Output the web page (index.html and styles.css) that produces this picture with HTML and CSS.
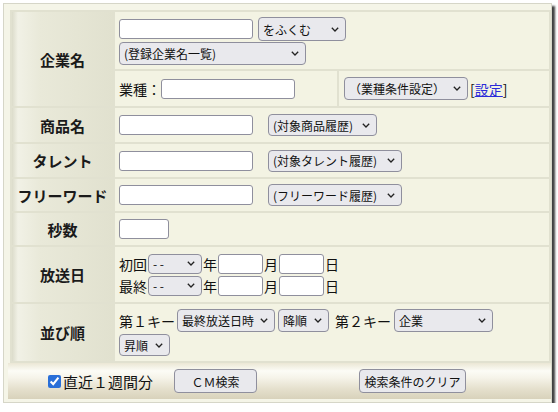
FILE: index.html
```html
<!DOCTYPE html>
<html lang="ja">
<head>
<meta charset="utf-8">
<title>CM検索</title>
<link rel="stylesheet" href="styles.css">
</head>
<body>
<div class="frame">
  <div class="grid">
    <div class="lbl">企業名</div>
    <div class="company">
      <div class="cell c-top">
        <div class="line">
          <input class="txt w134" type="text">
          <select class="sel s-fuku"><option>をふくむ</option></select>
        </div>
        <div class="line">
          <select class="sel s-reg"><option>(登録企業名一覧)</option></select>
        </div>
      </div>
      <div class="c-bottom">
        <div class="cell"><span class="t">業種：</span><input class="txt w134" type="text"></div>
        <div class="cell c-cond">
          <select class="sel s-cond"><option>（業種条件設定）</option></select>
          <span class="t br">[<a href="#" class="lnk">設定</a>]</span>
        </div>
      </div>
    </div>

    <div class="lbl">商品名</div>
    <div class="cell">
      <input class="txt w134" type="text">
      <select class="sel s-hist s-hist1"><option>(対象商品履歴)</option></select>
    </div>

    <div class="lbl">タレント</div>
    <div class="cell">
      <input class="txt w134" type="text">
      <select class="sel s-hist s-hist2"><option>(対象タレント履歴)</option></select>
    </div>

    <div class="lbl">フリーワード</div>
    <div class="cell">
      <input class="txt w134" type="text">
      <select class="sel s-hist s-hist2"><option>(フリーワード履歴)</option></select>
    </div>

    <div class="lbl">秒数</div>
    <div class="cell">
      <input class="txt w50" type="text">
    </div>

    <div class="lbl">放送日</div>
    <div class="cell col">
      <div class="line dl">
        <span class="t">初回</span>
        <select class="sel s-date"><option>- -</option></select>
        <span class="t">年</span>
        <input class="txt w45" type="text">
        <span class="t">月</span>
        <input class="txt w45" type="text">
        <span class="t">日</span>
      </div>
      <div class="line dl">
        <span class="t">最終</span>
        <select class="sel s-date"><option>- -</option></select>
        <span class="t">年</span>
        <input class="txt w45" type="text">
        <span class="t">月</span>
        <input class="txt w45" type="text">
        <span class="t">日</span>
      </div>
    </div>

    <div class="lbl">並び順</div>
    <div class="cell col sort">
      <div class="line">
        <span class="t">第１キー</span>
        <select class="sel s-k1"><option>最終放送日時</option></select>
        <select class="sel s-ord s-desc"><option>降順</option></select>
        <span class="t k2">第２キー</span>
        <select class="sel s-k2"><option>企業</option></select>
      </div>
      <div class="line">
        <select class="sel s-ord s-asc"><option>昇順</option></select>
      </div>
    </div>
  </div>

  <div class="bar">
    <label class="chk"><input type="checkbox" checked><span>直近１週間分</span></label>
    <button class="btn b-search" type="button">ＣＭ検索</button>
    <button class="btn b-clear" type="button">検索条件のクリア</button>
  </div>
</div>
</body>
</html>
```

FILE: styles.css
```css
html, body {
  margin: 0;
  padding: 0;
  background: #ffffff;
}

body {
  font-family: "Noto Sans CJK JP", "Noto Sans", sans-serif;
  color: #111;
}

.frame {
  margin: 3px 0 0 3px;
  width: 549px;
  height: 400px;
  box-sizing: border-box;
  border: 1px solid #d6d6c8;
  background: #f5f5e8;
  box-shadow: 3px 3px 2px rgba(0, 0, 0, 0.75);
  overflow: hidden;
}

.grid {
  display: grid;
  grid-template-columns: 101px 434px;
  grid-template-rows: 94px 34px 33px 32px 32px 55px 57px;
  gap: 2px;
  padding: 2px;
  margin: 6px 0 0 6px;
  width: max-content;
  background: #e1e1d0;
}

.lbl {
  display: flex;
  align-items: center;
  justify-content: center;
  font-size: 15px;
  font-weight: bold;
  line-height: 1;
  color: #1a1a1a;
  background: linear-gradient(to right, #dcdccb 0, #f1f1e6 6px, #e9e9d9 28px, #e1e1cf 100%);
}

.cell {
  display: flex;
  align-items: center;
  padding-left: 4px;
  background: #f3f3e3;
  font-size: 14px;
  line-height: 1;
}

.company {
  display: grid;
  grid-template-rows: 57px 35px;
  gap: 2px;
}

.c-top {
  flex-direction: column;
  align-items: flex-start;
  justify-content: flex-start;
  padding-top: 5px;
  gap: 1px;
}

.c-bottom {
  display: grid;
  grid-template-columns: 222px 210px;
  gap: 2px;
}

.c-cond {
  padding-left: 5px;
}

.line {
  display: flex;
  align-items: center;
}

.col {
  flex-direction: column;
  align-items: flex-start;
  justify-content: center;
  gap: 2px;
}

.t {
  font-size: 14px;
  line-height: 1;
  white-space: nowrap;
}

.br {
  margin-left: 2px;
}

.lnk {
  color: #2b2bd9;
  text-decoration: underline;
}

.txt {
  box-sizing: border-box;
  height: 20px;
  margin: 0;
  padding: 0 3px;
  border: 1px solid #8f8f9d;
  border-radius: 3px;
  background: #fff;
  font-family: inherit;
  font-size: 12px;
}

.w134 { width: 134px; }
.w50 { width: 50px; }
.w45 { width: 45px; }

.sel {
  appearance: none;
  -webkit-appearance: none;
  box-sizing: border-box;
  margin: 0;
  padding: 0 16px 0 4px;
  height: 23px;
  border: 1px solid #8f8f9d;
  border-radius: 4px;
  background-color: #e9e9ed;
  background-image: url("data:image/svg+xml,%3Csvg xmlns='http://www.w3.org/2000/svg' width='8' height='5' viewBox='0 0 8 5'%3E%3Cpath d='M0.8 0.8 L4 4 L7.2 0.8' fill='none' stroke='%23222' stroke-width='1.3'/%3E%3C/svg%3E");
  background-repeat: no-repeat;
  background-position: right 6px center;
  background-size: 8px 5px;
  font-family: inherit;
  font-size: 12px;
  color: #111;
  line-height: normal;
}

.s-fuku { width: 88px; height: 24px; margin-left: 5px; }
.s-reg { width: 187px; height: 23px; }
.s-cond { width: 124px; height: 23px; }
.s-hist { height: 22px; margin-left: 15px; }
.s-hist1 { width: 109px; }
.s-hist2 { width: 134px; }

.dl .txt, .dl .sel { margin: 0 1px; }
.s-date { width: 54px; height: 20px; }

.s-k1 { width: 98px; margin-left: 2px; }
.s-ord { width: 51px; }
.s-desc { margin-left: 3px; }
.s-asc { height: 22px; }
.k2 { margin-left: 6px; }
.s-k2 { width: 99px; margin-left: 3px; }

.bar {
  display: flex;
  align-items: center;
  margin-left: 4px;
  height: 36px;
  padding-left: 40px;
  background: linear-gradient(to bottom, #ebe7d5 0, #fcfcf6 22%, #f6f4ea 40%, #e5e0cd 72%, #d8d2bb 100%);
}

.chk {
  display: flex;
  align-items: center;
  font-size: 15px;
  line-height: 1;
}

.chk input {
  width: 13px;
  height: 13px;
  margin: 0 2px 0 0;
  accent-color: #2a6fd8;
}

.btn {
  box-sizing: border-box;
  height: 24px;
  margin: 0;
  padding: 0;
  border: 1px solid #8f8f9d;
  border-radius: 4px;
  background: #e9e9ed;
  font-family: inherit;
  font-size: 12px;
  color: #111;
}

.b-search { width: 83px; margin-left: 21px; }
.b-clear { width: 107px; margin-left: 102px; }
```
